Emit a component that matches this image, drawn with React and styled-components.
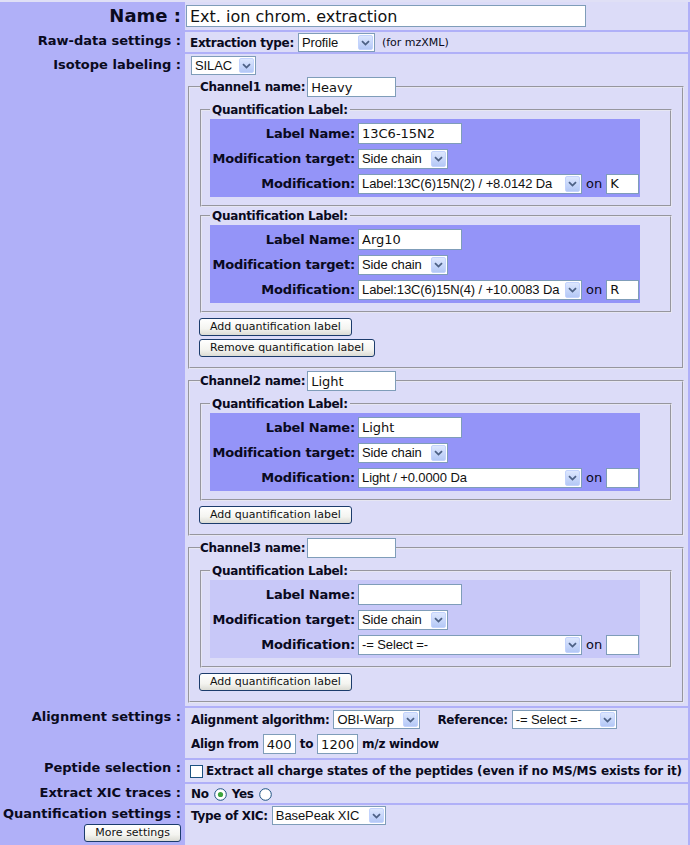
import React from 'react';
import styled, { createGlobalStyle } from 'styled-components';

const GlobalStyle = createGlobalStyle`
  body {
    margin: 0;
    background: #e0e0f6;
    color: #0a0a20;
    font-family: "DejaVu Sans", Verdana, sans-serif;
  }
`;

const Form = styled.div`
  display: grid;
  grid-template-columns: 183px 503px;
  column-gap: 2px;
  row-gap: 2px;
  width: 688px;
  margin-top: 2px;
  background: #b0b0f8;
  border-right: 2px solid #b0b0f8;
  border-bottom: 1px solid #b0b0f8;
`;

const Head = styled.div`
  background: #b0b0f8;
  text-align: right;
  font-weight: bold;
  font-size: 13px;
  line-height: 16px;
  white-space: nowrap;
  padding: ${p => p.$pad || '1px 2px 0 0'};
  display: flex;
  flex-direction: column;
  align-items: flex-end;
  justify-content: ${p => (p.$center ? 'center' : 'flex-start')};
  gap: 2px;
`;

const BigHead = styled(Head)`
  font-size: 18px;
`;

const Cell = styled.div`
  background: #dcdcf8;
  padding: ${p => p.$pad || '2px 4px'};
  font-size: 12px;
  letter-spacing: ${p => p.$ls || -0.3}px;
  font-weight: bold;
  line-height: 16px;
  white-space: nowrap;
`;

const Line = styled.div`
  display: flex;
  align-items: center;
  gap: ${p => p.$gap || 4}px;
  margin-bottom: ${p => p.$mb || 0}px;
`;

const Note = styled.span`
  font-size: 11px;
  font-weight: normal;
  letter-spacing: 0;
  margin-left: 3px;
`;

const Spacer = styled.span`
  margin-left: ${p => p.$w}px;
`;

const TextBox = styled.input`
  box-sizing: border-box;
  width: ${p => p.$w}px;
  height: ${p => p.$h || 20}px;
  border: 1px solid #7f9db9;
  background: #fff;
  padding: 0 3px;
  margin: 0;
  font-family: "DejaVu Sans", Verdana, sans-serif;
  font-size: ${p => p.$fs || 13}px;
  letter-spacing: 0;
  font-weight: normal;
  color: #111;
  outline: none;
`;

const SelectBox = styled.span`
  box-sizing: border-box;
  display: inline-flex;
  align-items: center;
  justify-content: space-between;
  width: ${p => p.$w}px;
  height: ${p => p.$h || 19}px;
  border: 1px solid #7f9db9;
  background: #fff;
  padding: 0 1px 0 3px;
  font-family: "Liberation Sans", Arial, sans-serif;
  font-size: 13px;
  letter-spacing: -0.1px;
  font-weight: normal;
  color: #111;
  white-space: nowrap;
  overflow: hidden;
`;

const DropBtn = styled.span`
  box-sizing: border-box;
  flex: none;
  width: 15px;
  height: calc(100% - 2px);
  display: flex;
  align-items: center;
  justify-content: center;
  border: 1px solid #c3d3fd;
  border-radius: 2px;
  background: linear-gradient(#dde7fe, #b4c8f6);
`;

const Select = ({ w, h, children }) => (
  <SelectBox $w={w} $h={h}>
    <span>{children}</span>
    <DropBtn>
      <svg width="9" height="6" viewBox="0 0 9 6">
        <path d="M1 1.2 L4.5 4.6 L8 1.2" fill="none" stroke="#4d6185" strokeWidth="1.8" />
      </svg>
    </DropBtn>
  </SelectBox>
);

const Button = styled.button`
  box-sizing: border-box;
  height: 18px;
  padding: 0 10px;
  margin: 0;
  border: 1px solid #1c3c6c;
  border-radius: 3px;
  background: linear-gradient(#ffffff 0%, #f4f4f0 60%, #dcdcd4 100%);
  font-family: "DejaVu Sans", Verdana, sans-serif;
  font-size: 11px;
  font-weight: normal;
  letter-spacing: 0;
  line-height: 16px;
  color: #111;
  white-space: nowrap;
  display: block;
`;

const Channel = styled.fieldset`
  margin: 2px 4px 0 3px;
  padding: 5px 10px 10px;
  border: 2px groove #e6e6f2;
  min-width: 0;
`;

const ChannelLegend = styled.legend`
  padding: 0;
  display: flex;
  align-items: center;
  gap: 2px;
`;

const LabelSet = styled.fieldset`
  margin: 0 0 ${p => p.$mb || 0}px;
  padding: 0 8px 8px;
  border: 2px groove #e6e6f2;
  min-width: 0;
`;

const LabelLegend = styled.legend`
  padding: 0 2px;
  line-height: 16px;
`;

const LabelTable = styled.div`
  display: inline-grid;
  grid-template-columns: 148px auto;
  grid-auto-rows: 25px;
  padding: 2px 1px 1px 0;
  margin-top: 1px;
  background: ${p => (p.$light ? '#c8c8f8' : '#9494f8')};
`;

const LabelKey = styled.div`
  display: flex;
  align-items: center;
  justify-content: flex-end;
  padding-right: 3px;
  font-size: 13px;
  letter-spacing: -0.2px;
  font-weight: bold;
`;

const LabelValue = styled.div`
  display: flex;
  align-items: center;
  gap: 4px;
  font-size: 13px;
  letter-spacing: 0;
  font-weight: normal;
`;

const Buttons = styled.div`
  display: flex;
  flex-direction: column;
  align-items: flex-start;
  gap: 3px;
  margin-top: 5px;
  margin-left: -1px;
`;

const Check = styled.span`
  box-sizing: border-box;
  display: inline-block;
  width: 13px;
  height: 13px;
  border: 1px solid #1c5180;
  background: #fff;
`;

const Radio = ({ on }) => (
  <svg width="13" height="13" viewBox="0 0 13 13">
    <circle cx="6.5" cy="6.5" r="5.8" fill="#fff" stroke="#1c5180" strokeWidth="1" />
    {on && <circle cx="6.5" cy="6.5" r="2.6" fill="#3ea43e" />}
  </svg>
);

const QuantLabel = ({ name, mod, on, light, mb }) => (
  <LabelSet $mb={mb}>
    <LabelLegend>Quantification Label:</LabelLegend>
    <LabelTable $light={light}>
      <LabelKey>Label Name:</LabelKey>
      <LabelValue>
        <TextBox $w={104} $h={21} defaultValue={name} />
      </LabelValue>
      <LabelKey>Modification target:</LabelKey>
      <LabelValue>
        <Select w={90} h={20}>Side chain</Select>
      </LabelValue>
      <LabelKey>Modification:</LabelKey>
      <LabelValue>
        <Select w={224} h={20}>{mod}</Select>
        <span>on</span>
        <TextBox $w={33} $h={20} defaultValue={on} />
      </LabelValue>
    </LabelTable>
  </LabelSet>
);

const ChannelBox = ({ n, name, labels, remove }) => (
  <Channel>
    <ChannelLegend>
      Channel{n} name:
      <TextBox $w={89} $h={20} defaultValue={name} />
    </ChannelLegend>
    {labels.map((l, i) => (
      <QuantLabel key={i} {...l} mb={i < labels.length - 1 ? 1 : 0} />
    ))}
    <Buttons>
      <Button>Add quantification label</Button>
      {remove && <Button>Remove quantification label</Button>}
    </Buttons>
  </Channel>
);

const channels = [
  {
    n: 1,
    name: 'Heavy',
    remove: true,
    labels: [
      { name: '13C6-15N2', mod: 'Label:13C(6)15N(2) / +8.0142 Da', on: 'K' },
      { name: 'Arg10', mod: 'Label:13C(6)15N(4) / +10.0083 Da', on: 'R' }
    ]
  },
  {
    n: 2,
    name: 'Light',
    labels: [{ name: 'Light', mod: 'Light / +0.0000 Da', on: '' }]
  },
  {
    n: 3,
    name: '',
    labels: [{ name: '', mod: '-= Select =-', on: '', light: true }]
  }
];

const App = () => (
  <>
    <GlobalStyle />
    <Form>
      <BigHead $center $pad="0 2px 0 0">Name :</BigHead>
      <Cell $pad="3px 1px">
        <TextBox $w={400} $h={22} $fs={16} defaultValue="Ext. ion chrom. extraction" />
      </Cell>

      <Head>Raw-data settings :</Head>
      <Cell $pad="1px 4px 0 5px">
        <Line>
          Extraction type:
          <Select w={77}>Profile</Select>
          <Note>(for mzXML)</Note>
        </Line>
      </Cell>

      <Head $pad="3px 2px 0 0">Isotope labeling :</Head>
      <Cell $pad="2px 0 3px 0">
        <Line $mb={1} style={{ paddingLeft: 6 }}>
          <Select w={65}>SILAC</Select>
        </Line>
        {channels.map(c => (
          <ChannelBox key={c.n} {...c} />
        ))}
      </Cell>

      <Head $pad="1px 2px 0 0">Alignment settings :</Head>
      <Cell $pad="2px 4px 4px 6px">
        <Line $mb={5}>
          Alignment algorithm:
          <Select w={87}>OBI-Warp</Select>
          <Spacer $w={13}>Reference:</Spacer>
          <Select w={105}>-= Select =-</Select>
        </Line>
        <Line>
          Align from
          <TextBox $w={33} defaultValue="400" />
          to
          <TextBox $w={41} defaultValue="1200" />
          m/z window
        </Line>
      </Cell>

      <Head $pad="0 2px 0 0">Peptide selection :</Head>
      <Cell $pad="3px 4px 3px 5px" $ls={-0.15}>
        <Line $gap={3}>
          <Check />
          Extract all charge states of the peptides (even if no MS/MS exists for it)
        </Line>
      </Cell>

      <Head $pad="1px 2px 0 0">Extract XIC traces :</Head>
      <Cell $pad="2px 4px 1px 6px">
        <Line $gap={5}>
          No
          <Radio on />
          Yes
          <Radio />
        </Line>
      </Cell>

      <Head $pad="1px 2px 3px 0">
        Quantification settings :
        <Button>More settings</Button>
      </Head>
      <Cell $pad="1px 4px 0 6px">
        <Line>
          Type of XIC:
          <Select w={114}>BasePeak XIC</Select>
        </Line>
      </Cell>
    </Form>
  </>
);

export default App;
